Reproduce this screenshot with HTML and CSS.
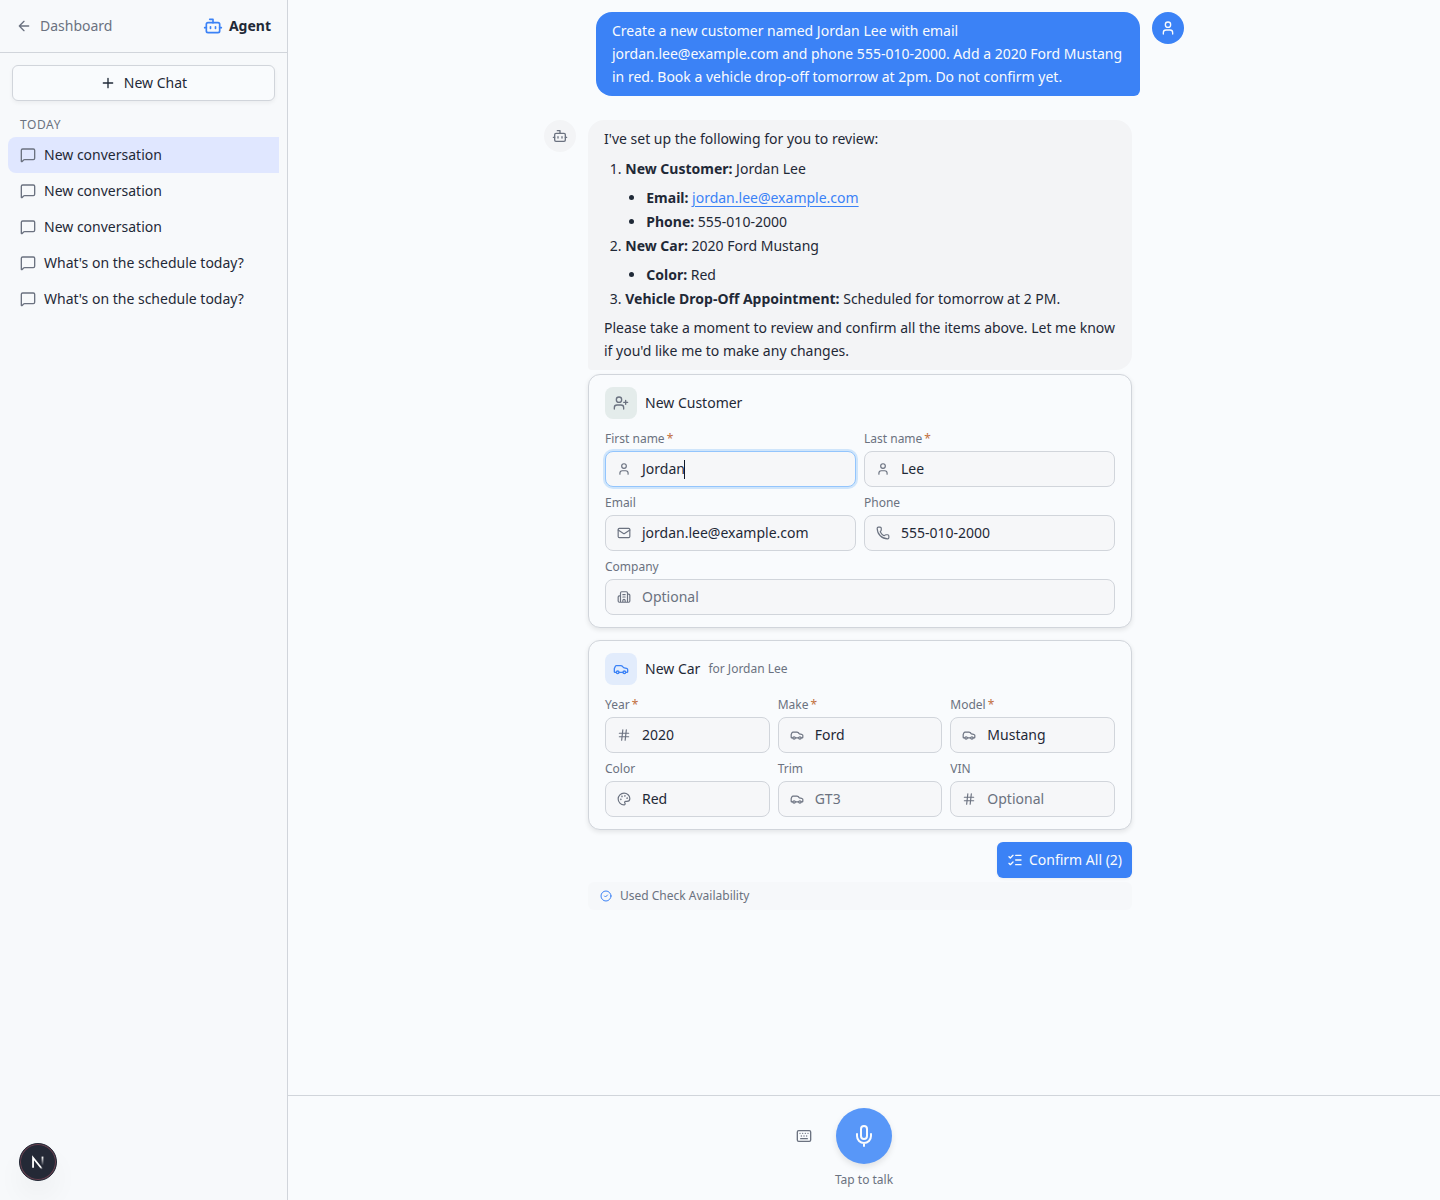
FILE: index.html
```html
<!DOCTYPE html>
<html lang="en">
<head>
<meta charset="utf-8">
<title>Agent</title>
<link rel="stylesheet" href="styles.css">
</head>
<body>
<svg class="sprite" aria-hidden="true">
  <symbol id="arrow-left" viewBox="0 0 24 24"><path d="m12 19-7-7 7-7M19 12H5"/></symbol>
  <symbol id="bot" viewBox="0 0 24 24"><path d="M12 8V4H8"/><rect x="4" y="8" width="16" height="12" rx="2"/><path d="M2 14h2M20 14h2M15 13v2M9 13v2"/></symbol>
  <symbol id="plus" viewBox="0 0 24 24"><path d="M5 12h14M12 5v14"/></symbol>
  <symbol id="message" viewBox="0 0 24 24"><path d="M22 17a2 2 0 0 1-2 2H6.828a2 2 0 0 0-1.414.586l-2.202 2.202A.71.71 0 0 1 2 21.286V5a2 2 0 0 1 2-2h16a2 2 0 0 1 2 2z"/></symbol>
  <symbol id="user" viewBox="0 0 24 24"><path d="M19 21v-2a4 4 0 0 0-4-4H9a4 4 0 0 0-4 4v2"/><circle cx="12" cy="7" r="4"/></symbol>
  <symbol id="user-plus" viewBox="0 0 24 24"><path d="M16 21v-2a4 4 0 0 0-4-4H6a4 4 0 0 0-4 4v2"/><circle cx="9" cy="7" r="4"/><path d="M19 8v6M22 11h-6"/></symbol>
  <symbol id="mail" viewBox="0 0 24 24"><path d="m22 7-8.991 5.727a2 2 0 0 1-2.009 0L2 7"/><rect x="2" y="4" width="20" height="16" rx="2"/></symbol>
  <symbol id="phone" viewBox="0 0 24 24"><path d="M13.832 16.568a1 1 0 0 0 1.213-.303l.355-.465A2 2 0 0 1 17 15h3a2 2 0 0 1 2 2v3a2 2 0 0 1-2 2A18 18 0 0 1 2 4a2 2 0 0 1 2-2h3a2 2 0 0 1 2 2v3a2 2 0 0 1-.8 1.6l-.468.351a1 1 0 0 0-.292 1.233 14 14 0 0 0 6.392 6.384"/></symbol>
  <symbol id="building" viewBox="0 0 24 24"><path d="M10 12h4M10 8h4M14 21v-3a2 2 0 0 0-4 0v3M6 10H4a2 2 0 0 0-2 2v7a2 2 0 0 0 2 2h16a2 2 0 0 0 2-2V9a2 2 0 0 0-2-2h-2M6 21V5a2 2 0 0 1 2-2h8a2 2 0 0 1 2 2v16"/></symbol>
  <symbol id="car" viewBox="0 0 24 24"><path d="M19 17h2c.6 0 1-.4 1-1v-3c0-.9-.7-1.7-1.5-1.9C18.7 10.6 16 10 16 10s-1.3-1.4-2.2-2.3c-.5-.4-1.1-.7-1.8-.7H5c-.6 0-1.1.4-1.4.9l-1.4 2.9A3.7 3.7 0 0 0 2 12v4c0 .6.4 1 1 1h2M9 17h6"/><circle cx="7" cy="17" r="2"/><circle cx="17" cy="17" r="2"/></symbol>
  <symbol id="hash" viewBox="0 0 24 24"><path d="M4 9h16M4 15h16M10 3 8 21M16 3l-2 18"/></symbol>
  <symbol id="palette" viewBox="0 0 24 24"><path d="M12 22a1 1 0 0 1 0-20 10 9 0 0 1 10 9 5 5 0 0 1-5 5h-2.25a1.75 1.75 0 0 0-1.4 2.8l.3.4a1.75 1.75 0 0 1-1.4 2.8z"/><circle cx="13.5" cy="6.5" r=".5"/><circle cx="17.5" cy="10.5" r=".5"/><circle cx="6.5" cy="12.5" r=".5"/><circle cx="8.5" cy="7.5" r=".5"/></symbol>
  <symbol id="list-checks" viewBox="0 0 24 24"><path d="M13 5h8M13 12h8M13 19h8M3 17l2 2 4-4M3 7l2 2 4-4"/></symbol>
  <symbol id="circle-check" viewBox="0 0 24 24"><circle cx="12" cy="12" r="10"/><path d="m9 12 2 2 4-4"/></symbol>
  <symbol id="keyboard" viewBox="0 0 24 24"><path d="M10 8h.01M12 12h.01M14 8h.01M16 12h.01M18 8h.01M6 8h.01M7 16h10M8 12h.01"/><rect x="2" y="4" width="20" height="16" rx="2"/></symbol>
  <symbol id="mic" viewBox="0 0 24 24"><path d="M12 19v3M19 10v2a7 7 0 0 1-14 0v-2"/><rect x="9" y="2" width="6" height="13" rx="3"/></symbol>
</svg>
<div class="app">
  <aside class="sidebar">
    <header class="side-head">
      <a class="back"><svg class="i16"><use href="#arrow-left"/></svg>Dashboard</a>
      <div class="brand"><svg class="i20"><use href="#bot"/></svg>Agent</div>
    </header>
    <div class="side-new"><button class="new-chat"><svg class="i16"><use href="#plus"/></svg>New Chat</button></div>
    <div class="group">Today</div>
    <nav class="chats">
      <a class="chat active"><svg class="i16"><use href="#message"/></svg>New conversation</a>
      <a class="chat"><svg class="i16"><use href="#message"/></svg>New conversation</a>
      <a class="chat"><svg class="i16"><use href="#message"/></svg>New conversation</a>
      <a class="chat"><svg class="i16"><use href="#message"/></svg>What's on the schedule today?</a>
      <a class="chat"><svg class="i16"><use href="#message"/></svg>What's on the schedule today?</a>
    </nav>
  </aside>
  <main class="main">
    <div class="scroll">
      <div class="thread">
        <div class="msg msg-user">
          <div class="bubble bubble-user">Create a new customer named Jordan Lee with email jordan.lee@example.com and phone 555-010-2000. Add a 2020 Ford Mustang in red. Book a vehicle drop-off tomorrow at 2pm. Do not confirm yet.</div>
          <div class="avatar avatar-user"><svg class="i16"><use href="#user"/></svg></div>
        </div>
        <div class="msg">
          <div class="avatar"><svg class="i16"><use href="#bot"/></svg></div>
          <div class="reply">
            <div class="bubble bubble-agent">
              <p>I've set up the following for you to review:</p>
              <ol>
                <li><strong>New Customer:</strong> Jordan Lee
                  <ul><li><strong>Email:</strong> <a class="link">jordan.lee@example.com</a></li><li><strong>Phone:</strong> 555-010-2000</li></ul></li>
                <li><strong>New Car:</strong> 2020 Ford Mustang
                  <ul><li><strong>Color:</strong> Red</li></ul></li>
                <li><strong>Vehicle Drop-Off Appointment:</strong> Scheduled for tomorrow at 2 PM.</li>
              </ol>
              <p>Please take a moment to review and confirm all the items above. Let me know if you'd like me to make any changes.</p>
            </div>
            <div class="cards">
              <section class="card">
                <div class="card-head"><span class="tile tile-green"><svg class="i16"><use href="#user-plus"/></svg></span><span>New Customer</span></div>
                <div class="fields two">
                  <div class="field"><label>First name<b>*</b></label><div class="input focused"><svg class="i14"><use href="#user"/></svg><span>Jordan</span><i class="caret"></i></div></div>
                  <div class="field"><label>Last name<b>*</b></label><div class="input"><svg class="i14"><use href="#user"/></svg><span>Lee</span></div></div>
                  <div class="field"><label>Email</label><div class="input"><svg class="i14"><use href="#mail"/></svg><span>jordan.lee@example.com</span></div></div>
                  <div class="field"><label>Phone</label><div class="input"><svg class="i14"><use href="#phone"/></svg><span>555-010-2000</span></div></div>
                  <div class="field wide"><label>Company</label><div class="input empty"><svg class="i14"><use href="#building"/></svg><span>Optional</span></div></div>
                </div>
              </section>
              <section class="card">
                <div class="card-head"><span class="tile tile-blue"><svg class="i16"><use href="#car"/></svg></span><span>New Car</span><small>for Jordan Lee</small></div>
                <div class="fields three">
                  <div class="field"><label>Year<b>*</b></label><div class="input"><svg class="i14"><use href="#hash"/></svg><span>2020</span></div></div>
                  <div class="field"><label>Make<b>*</b></label><div class="input"><svg class="i14"><use href="#car"/></svg><span>Ford</span></div></div>
                  <div class="field"><label>Model<b>*</b></label><div class="input"><svg class="i14"><use href="#car"/></svg><span>Mustang</span></div></div>
                  <div class="field"><label>Color</label><div class="input"><svg class="i14"><use href="#palette"/></svg><span>Red</span></div></div>
                  <div class="field"><label>Trim</label><div class="input empty"><svg class="i14"><use href="#car"/></svg><span>GT3</span></div></div>
                  <div class="field"><label>VIN</label><div class="input empty"><svg class="i14"><use href="#hash"/></svg><span>Optional</span></div></div>
                </div>
              </section>
              <button class="confirm"><svg class="i16"><use href="#list-checks"/></svg>Confirm All (2)</button>
            </div>
            <div class="tool"><svg class="i12"><use href="#circle-check"/></svg>Used Check Availability</div>
          </div>
        </div>
      </div>
    </div>
    <footer class="composer">
      <div class="talk-row">
        <button class="kbd"><svg class="i16"><use href="#keyboard"/></svg></button>
        <button class="mic"><svg class="i24"><use href="#mic"/></svg></button>
        <span class="kbd"></span>
      </div>
      <div class="hint">Tap to talk</div>
    </footer>
  </main>
</div>
<div class="dev-badge">
  <svg viewBox="0 0 40 40">
    <defs>
      <linearGradient id="n-diag" gradientUnits="userSpaceOnUse" x1="20" y1="19" x2="26" y2="27"><stop offset="0" stop-color="#fff"/><stop offset=".7" stop-color="#fff"/><stop offset="1" stop-color="#fff" stop-opacity="0"/></linearGradient>
      <linearGradient id="n-stem" gradientUnits="userSpaceOnUse" x1="0" y1="14" x2="0" y2="24"><stop offset="0" stop-color="#fff"/><stop offset="1" stop-color="#fff" stop-opacity="0"/></linearGradient>
    </defs>
    <path d="M14.5 26.5V15.2L24.8 28" stroke="url(#n-diag)" stroke-width="2" fill="none"/>
    <rect x="24" y="14" width="2" height="11" fill="url(#n-stem)"/>
  </svg>
</div>
</body>
</html>
```
FILE: styles.css
```css
* { box-sizing: border-box; }
body { margin: 0; font: 14px/20px "Noto Sans", "Open Sans", sans-serif; color: #1f2937; background: #f9fbfd; }
button { font: inherit; color: inherit; border: 0; padding: 0; background: none; }
.sprite { display: none; }
svg { flex: none; fill: none; stroke: currentColor; stroke-width: 2; stroke-linecap: round; stroke-linejoin: round; }
.i12 { width: 12px; height: 12px; }
.i14 { width: 14px; height: 14px; }
.i16 { width: 16px; height: 16px; }
.i20 { width: 20px; height: 20px; }
.i24 { width: 24px; height: 24px; }

.app { display: flex; height: 1200px; overflow: hidden; }
.sidebar { width: 288px; flex: none; background: #f7f9fb; border-right: 1px solid #d1d5db; }
.side-head { height: 53px; padding: 0 16px; display: flex; align-items: center; justify-content: space-between; border-bottom: 1px solid #d1d5db; }
.back { display: flex; align-items: center; gap: 8px; color: #6b7280; }
.brand { display: flex; align-items: center; gap: 6px; font-weight: 700; }
.brand svg { color: #3b82f6; }
.side-new { padding: 12px; }
.new-chat { width: 100%; height: 36px; display: flex; align-items: center; justify-content: center; gap: 8px; border: 1px solid #d1d5db; border-radius: 6px; background: #f9fbfd; box-shadow: 0 2px 4px rgba(0,0,0,.05); }
.group { padding: 4px 20px; font-size: 12px; line-height: 16px; letter-spacing: .6px; text-transform: uppercase; color: #6b7280; }
.chats { padding: 0 8px; }
.chat { display: flex; align-items: center; gap: 8px; height: 36px; padding: 0 12px; border-radius: 8px 0 0 8px; }
.chat svg { color: #6b7280; }
.chat.active { background: #e0e7ff; }

.main { flex: 1; display: flex; flex-direction: column; }
.scroll { flex: 1; }
.thread { width: 640px; margin: 0 auto; padding-top: 12px; display: flex; flex-direction: column; gap: 24px; }
.msg { display: flex; gap: 12px; align-items: flex-start; }
.msg-user { justify-content: flex-end; }
.avatar { width: 32px; height: 32px; flex: none; border-radius: 50%; background: #f3f4f6; color: #6b7280; display: flex; align-items: center; justify-content: center; }
.avatar-user { background: #3b82f6; color: #f9fbfd; }
.bubble { padding: 8px 16px; border-radius: 16px; line-height: 22.75px; }
.bubble-user { width: 544px; height: 84px; background: #3b82f6; color: #f9fbfd; border-bottom-right-radius: 6px; }
.reply { width: 544px; }
.bubble-agent { background: #f3f4f6; border-bottom-left-radius: 4px; height: 250px; }
.bubble p, .bubble ol, .bubble ul { margin: 0; }
.bubble ol { margin: 7px 0 6px; padding-left: 21.25px; }
.bubble ul { margin: 6.25px 0 1.4px; padding-left: 21px; list-style: disc; }
.bubble ul li + li { margin-top: 1.25px; }
.link { color: #3b82f6; text-decoration: underline; text-underline-offset: 3px; }

.cards { margin-top: 4px; display: flex; flex-direction: column; gap: 12px; }
.card { border: 1px solid #d1d5db; border-radius: 12px; background: #f9fbfd; padding: 12px 16px; box-shadow: 0 2px 5px rgba(0,0,0,.09); }
.card-head { display: flex; align-items: center; gap: 8px; margin-bottom: 12px; }
.card-head small { font-size: 12px; color: #6b7280; }
.tile { width: 32px; height: 32px; border-radius: 8px; display: flex; align-items: center; justify-content: center; }
.tile-green { background: #e4eceb; color: #6b7280; }
.tile-blue { background: #e2ecfc; color: #3b82f6; }
.fields { display: grid; gap: 8px; }
.two { grid-template-columns: 1fr 1fr; }
.three { grid-template-columns: 1fr 1fr 1fr; }
.wide { grid-column: 1 / -1; }
.field label { display: block; font-size: 12px; line-height: 16px; margin-bottom: 4px; color: #6b7280; }
.field b { margin-left: 2px; font-weight: 400; color: #c2703d; }
.input { height: 36px; display: flex; align-items: center; padding: 0 11px; border: 1px solid #d1d5db; border-radius: 8px; background: #f6f7f9; }
.input svg { color: #6b7280; margin-right: 11px; }
.input.empty { color: #6b7280; }
.input.focused { border-color: #93c5fd; box-shadow: 0 0 0 2px #cfe5fb; }
.caret { width: 1px; height: 19px; margin-left: -1px; background: #111827; }
.confirm { align-self: flex-end; width: 135px; height: 36px; display: flex; align-items: center; justify-content: center; gap: 6px; border-radius: 6px; background: #3b82f6; color: #f9fbfd; white-space: nowrap; box-shadow: 0 1px 3px rgba(0,0,0,.06); }
.tool { margin-top: 4px; height: 28px; padding: 0 12px; display: flex; align-items: center; gap: 8px; border-radius: 6px; background: #f6f8fa; font-size: 12px; color: #6b7280; }
.tool svg { color: #3b82f6; }

.composer { height: 105px; border-top: 1px solid #d1d5db; padding-top: 12px; text-align: center; }
.talk-row { display: flex; align-items: center; justify-content: center; gap: 16px; }
.kbd { width: 32px; height: 32px; display: flex; align-items: center; justify-content: center; color: #6b7280; }
.mic { width: 56px; height: 56px; border-radius: 50%; display: flex; align-items: center; justify-content: center; background: #5897f8; color: #f9fbfd; box-shadow: 0 3px 6px rgba(0,0,0,.1); }
.hint { margin-top: 8px; font-size: 12px; line-height: 16px; color: #6b7280; }

.dev-badge { position: absolute; left: 19px; top: 1143px; width: 38px; height: 38px; border-radius: 50%; background: #242936; border: 1px solid #242936; box-shadow: inset 0 0 0 1px #6c4150, 0 16px 32px -8px rgba(0,0,0,.12); }
.dev-badge svg { display: block; width: 36px; height: 36px; stroke: none; stroke-linecap: butt; stroke-linejoin: miter; }
```
